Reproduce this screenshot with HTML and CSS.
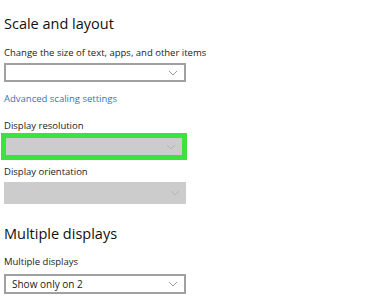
FILE: index.html
```html
<!DOCTYPE html>
<html lang="en">
<head>
  <meta charset="UTF-8">
  <title>Display settings</title>
  <link rel="stylesheet" href="styles.css">
</head>
<body>
  <!-- Scale and layout -->
  <section class="group">
    <h2 class="group-title">Scale and layout</h2>
    <div class="field-label">Change the size of text, apps, and other items</div>
    <div class="dropdown">
      <span class="dropdown-text"></span>
      <svg class="chevron" width="10" height="6" viewBox="0 0 10 6"><path d="M1 1 L5 5 L9 1" fill="none" stroke="#9a9a9a" stroke-width="1"/></svg>
    </div>
    <a href="#" class="link">Advanced scaling settings</a>

    <div class="field-label label-resolution">Display resolution</div>
    <div class="highlight">
      <div class="dropdown disabled">
        <span class="dropdown-text"></span>
        <svg class="chevron" width="10" height="6" viewBox="0 0 10 6"><path d="M1 1 L5 5 L9 1" fill="none" stroke="#b4b4b4" stroke-width="1"/></svg>
      </div>
    </div>

    <div class="field-label label-orientation">Display orientation</div>
    <div class="dropdown disabled tall">
      <span class="dropdown-text"></span>
      <svg class="chevron" width="10" height="6" viewBox="0 0 10 6"><path d="M1 1 L5 5 L9 1" fill="none" stroke="#b4b4b4" stroke-width="1"/></svg>
    </div>
  </section>

  <!-- Multiple displays -->
  <section class="group group-multi">
    <h2 class="group-title">Multiple displays</h2>
    <div class="field-label">Multiple displays</div>
    <div class="dropdown last">
      <span class="dropdown-text">Show only on 2</span>
      <svg class="chevron" width="10" height="6" viewBox="0 0 10 6"><path d="M1 1 L5 5 L9 1" fill="none" stroke="#9a9a9a" stroke-width="1"/></svg>
    </div>
  </section>
</body>
</html>
```
FILE: styles.css
```css
/* Base */
* { box-sizing: border-box; }
body {
  margin: 0;
  padding: 0 0 0 4px;
  font-family: 'Open Sans', 'Noto Sans', sans-serif;
  background: #fff;
  color: #1f1f1f;
}
.group {
  display: flex;
  flex-direction: column;
  align-items: flex-start;
}
.group-title {
  margin: 14px 0 0 0;
  font-size: 14.5px;
  font-weight: 400;
  line-height: 20px;
  color: #111;
}
.group-multi .group-title { margin-top: 20px; }
/* Labels */
.field-label {
  margin-top: 12px;
  font-size: 9.5px;
  line-height: 14px;
  color: #222;
}
.group-multi .field-label { margin-top: 11px; }
.label-resolution { margin-top: 13px; }
.label-orientation { margin-top: 5px; }
/* Dropdowns */
.dropdown {
  width: 182px;
  height: 19px;
  margin-top: 3px;
  border: 2px solid #a0a0a0;
  background: #fff;
  display: flex;
  align-items: center;
  justify-content: space-between;
  padding: 0 6px 0 6px;
}
.dropdown.last {
  height: 20px;
  margin-top: 5px;
}
.dropdown-text {
  font-size: 10px;
  line-height: 14px;
  color: #1a1a1a;
}
.dropdown.disabled {
  border: none;
  background: #cccccc;
}
.dropdown.tall {
  height: 22px;
  margin-top: 3px;
}
.chevron { display: block; }
/* Link */
.link {
  margin-top: 10px;
  font-size: 9.5px;
  line-height: 14px;
  color: #2a79c0;
  text-decoration: none;
}
/* Green highlight around resolution dropdown */
.highlight {
  margin: 0 0 0 -3px;
  border: 5px solid #3ee23e;
  width: 186px;
}
.highlight .dropdown {
  width: 176px;
  height: 17px;
  margin: 0;
}
```
